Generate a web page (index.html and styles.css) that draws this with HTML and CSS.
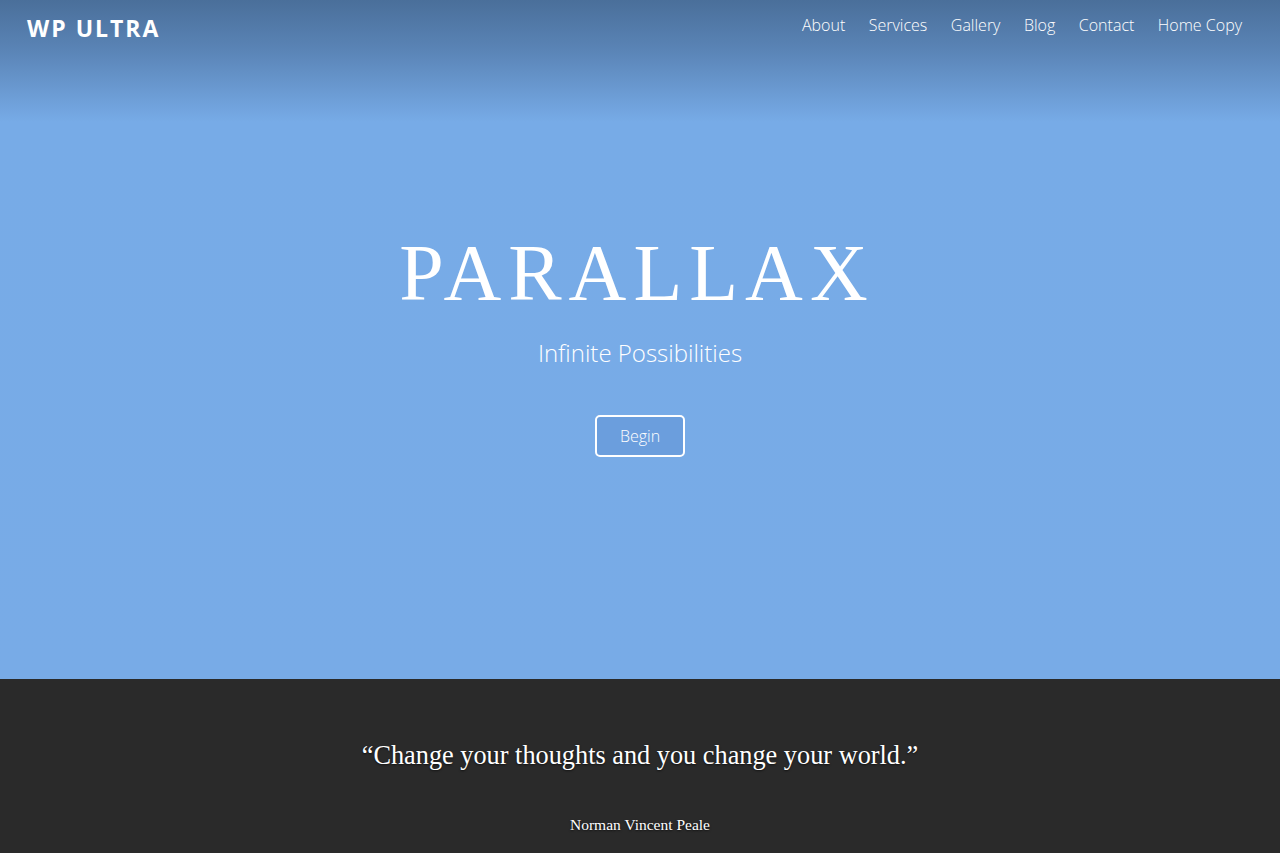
FILE: index.html
```html
<!DOCTYPE html>
<html>
<head>
<meta charset="utf-8">
<link rel="stylesheet" href="styles.css">
</head>
<body>
<section class="hero">
  <header class="topbar">
    <a class="logo">WP ULTRA</a>
    <nav class="menu">
      <a>About</a>
      <a>Services</a>
      <a>Gallery</a>
      <a>Blog</a>
      <a>Contact</a>
      <a>Home Copy</a>
    </nav>
  </header>
  <div class="hero-content">
    <h1 class="title">PARALLAX</h1>
    <p class="subtitle">Infinite Possibilities</p>
    <a class="btn">Begin</a>
  </div>
</section>
<section class="quote">
  <blockquote class="quote-text">“Change your thoughts and you change your world.”</blockquote>
  <p class="quote-author">Norman Vincent Peale</p>
</section>
</body>
</html>
```
FILE: styles.css
```css
* { box-sizing: border-box; }
html, body { margin: 0; padding: 0; }
body {
  font-family: "Open Sans", "Liberation Sans", sans-serif;
  background: #2a2a2a;
  overflow: hidden;
}
.hero {
  height: 679px;
  background: linear-gradient(to bottom, #4a6f9a 0px, #5a84b6 50px, #77abe7 122px, #78abe7 100%);
  display: flex;
  flex-direction: column;
  color: #fff;
}
.topbar {
  display: flex;
  justify-content: space-between;
  align-items: center;
  padding: 4px 38px 0 27px;
  height: 46px;
}
.logo {
  font-weight: 700;
  font-size: 23px;
  letter-spacing: 2px;
  color: #fff;
  margin-top: 6px;
}
.menu {
  display: flex;
  gap: 23.5px;
}
.menu a {
  font-weight: 300;
  font-size: 16px;
  color: #fff;
}
.hero-content {
  display: flex;
  flex-direction: column;
  align-items: center;
  padding-top: 187px;
}
.title {
  margin: 0 6px 0 0;
  font-family: "Liberation Serif", "Times New Roman", serif;
  font-weight: 400;
  font-size: 80px;
  line-height: 1;
  letter-spacing: 7px;
}
.subtitle {
  margin: 28px 0 0;
  font-weight: 300;
  font-size: 24px;
  line-height: 1;
}
.btn {
  margin-top: 50px;
  width: 90px;
  height: 42px;
  border: 2px solid #fff;
  border-radius: 5px;
  background: rgba(80, 130, 200, 0.3);
  display: flex;
  align-items: center;
  justify-content: center;
  font-weight: 300;
  font-size: 16px;
  color: #fff;
}
.quote {
  display: flex;
  flex-direction: column;
  align-items: center;
  color: #fff;
  font-family: "Liberation Serif", "Times New Roman", serif;
  text-shadow: 0 1px 2px rgba(0,0,0,0.6);
}
.quote-text {
  margin: 61px 0 0;
  font-size: 26.3px;
  line-height: 32px;
}
.quote-author {
  margin: 44px 0 0;
  font-size: 15.5px;
}
```
